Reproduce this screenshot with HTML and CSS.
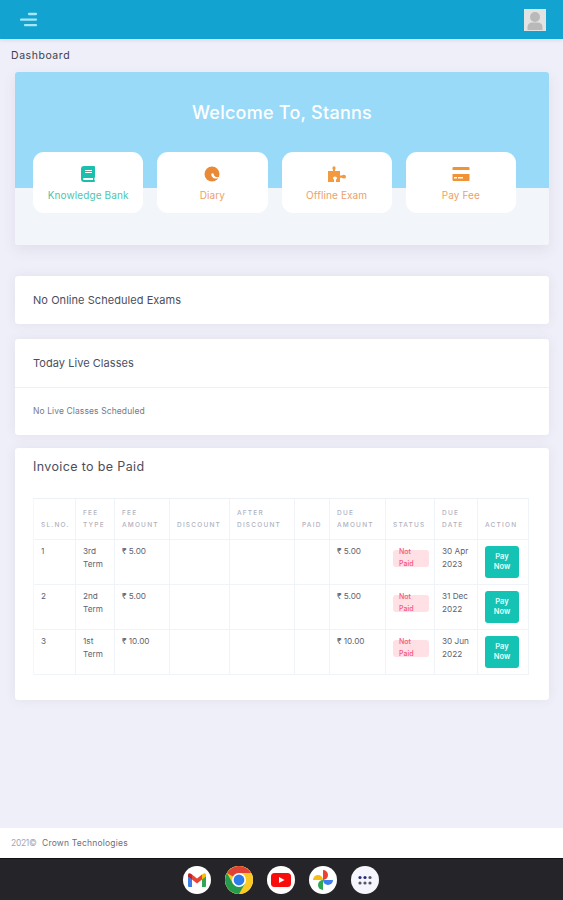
FILE: index.html
```
<!DOCTYPE html>
<html lang="en">
<head>
  <meta charset="utf-8">
  <title>Dashboard</title>
  <link rel="stylesheet" href="styles.css">
</head>
<body>
  <header class="topbar">
    <svg class="menu" width="18" height="16" viewBox="0 0 18 16">
      <path d="M9 2h7M1 7.600h15M5 13.200h11" fill="none" stroke="#a5e6f8" stroke-width="2.300" stroke-linecap="round"/>
    </svg>
    <svg class="avatar" width="22" height="22" viewBox="0 0 22 22">
      <rect width="22" height="22" fill="#e2e2e2"/>
      <circle cx="11" cy="8" r="5" fill="#b9b9b9"/>
      <path d="M3.500 21v-3c0-3 2-4.500 5-4.500h5c3 0 5 1.500 5 4.500v3z" fill="#b9b9b9"/>
    </svg>
  </header>
  <main>
    <h1 class="page-title">Dashboard</h1>
    <section class="hero">
      <h2>Welcome To, Stanns</h2>
      <div class="tiles">
        <a class="tile green">
          <svg width="16" height="16" viewBox="0 0 16 16">
            <path fill-rule="evenodd" d="M4 0h10q1 0 1 1v10q0 .7-.6 1v2q.6.200.6 1t-1 1H4q-3 0-3-3V3q0-3 3-3zM5 4v1h7V4zM5 6v1h7V6zM4 12q-1 0-1 1t1 1h9v-2z" fill="#1cbfae"/>
          </svg>
          <span>Knowledge Bank</span>
        </a>
        <a class="tile">
          <svg width="16" height="16" viewBox="0 0 16 16">
            <circle cx="8" cy="8" r="7.500" fill="#e98a37"/>
            <path d="M16 10.500Q13.500 11.800 11 10.500 9.500 9.500 9.700 7.800 8.500 6.600 7.300 8 6.700 10.500 9.300 12q2 1 4.300.300L15 13z" fill="#fff"/>
          </svg>
          <span>Diary</span>
        </a>
        <a class="tile">
          <svg width="20" height="16" viewBox="0 0 20 16">
            <path d="M1 5h5V3.800Q5.400 3 5.400 2q0-1.700 1.600-1.700T8.600 2q0 1-.6 1.800V5h5v4.600h1.700Q15.600 8.800 16.800 8.800 19 8.800 19 10.700T16.800 12.600q-1.200 0-2.100-.8H13V16H9v-2.500Q10 13 10 12q0-1.500-2-1.500T6 12q0 1 1 1.500V16H1z" fill="#f29a3d"/>
          </svg>
          <span>Offline Exam</span>
        </a>
        <a class="tile">
          <svg width="18" height="16" viewBox="0 0 18 16">
            <path fill-rule="evenodd" d="M1.500 1h15q1 0 1 1v2H.5V2q0-1 1-1zM.5 8h17v6q0 1-1 1h-15q-1 0-1-1zM2 11v1.500h3V11zM6 11v1.500h5V11z" fill="#f29236"/>
          </svg>
          <span>Pay Fee</span>
        </a>
      </div>
    </section>
    <section class="card exams">
      <h3>No Online Scheduled Exams</h3>
    </section>
    <section class="card live">
      <h3>Today Live Classes</h3>
      <p>No Live Classes Scheduled</p>
    </section>
    <section class="card invoice">
      <h2>Invoice to be Paid</h2>
      <table>
        <colgroup>
          <col class="w42"><col class="w39"><col class="w55"><col class="w60"><col class="w65">
          <col class="w35"><col class="w56"><col class="w49"><col class="w43"><col class="w51">
        </colgroup>
        <thead>
          <tr>
            <th>SL.NO.</th><th>FEE<br>TYPE</th><th>FEE<br>AMOUNT</th><th>DISCOUNT</th><th>AFTER<br>DISCOUNT</th>
            <th>PAID</th><th>DUE<br>AMOUNT</th><th>STATUS</th><th>DUE<br>DATE</th><th>ACTION</th>
          </tr>
        </thead>
        <tbody>
          <tr>
            <td>1</td><td>3rd<br>Term</td><td>₹ 5.00</td><td></td><td></td><td></td><td>₹ 5.00</td>
            <td><span class="badge">Not<br>Paid</span></td><td>30 Apr<br>2023</td><td><button>Pay<br>Now</button></td>
          </tr>
          <tr>
            <td>2</td><td>2nd<br>Term</td><td>₹ 5.00</td><td></td><td></td><td></td><td>₹ 5.00</td>
            <td><span class="badge">Not<br>Paid</span></td><td>31 Dec<br>2022</td><td><button>Pay<br>Now</button></td>
          </tr>
          <tr>
            <td>3</td><td>1st<br>Term</td><td>₹ 10.00</td><td></td><td></td><td></td><td>₹ 10.00</td>
            <td><span class="badge">Not<br>Paid</span></td><td>30 Jun<br>2022</td><td><button>Pay<br>Now</button></td>
          </tr>
        </tbody>
      </table>
    </section>
  </main>
  <footer class="footer"><span class="year">2021©</span><span class="company">Crown Technologies</span></footer>
  <nav class="dock">
    <span class="app">
      <svg width="20" height="16" viewBox="0 0 20 16">
        <path d="M1 3v11q0 1 1 1h3V6z" fill="#3c7de8"/>
        <path d="M19 3v11q0 1-1 1h-3V6z" fill="#2fa853"/>
        <path d="M5 2.500l5 4 5-4v5l-5 4-5-4z" fill="#e94335"/>
        <path d="M1 3q0-3 4-.5v5L1 4.500z" fill="#c5221f"/>
        <path d="M19 3q0-3-4-.5v5l4-3z" fill="#fbbc04"/>
      </svg>
    </span>
    <span class="app">
      <svg width="28" height="28" viewBox="0 0 28 28">
        <circle cx="14" cy="14" r="14" fill="#fbc921"/>
        <path d="M14 14L1.900 7A14 14 0 0 1 26.100 7H14z" fill="#e04235"/>
        <path d="M1.900 7A14 14 0 0 0 14 28l6-10.500L14 14 7.900 17.500z" fill="#279b4d"/>
        <circle cx="14" cy="14" r="7" fill="#fff"/>
        <circle cx="14" cy="14" r="5.400" fill="#2e7bea"/>
      </svg>
    </span>
    <span class="app">
      <svg width="20" height="14" viewBox="0 0 20 14">
        <rect width="20" height="14" rx="3.500" fill="#f80d0d"/>
        <path d="M8 4l5.500 3L8 10z" fill="#fff"/>
      </svg>
    </span>
    <span class="app">
      <svg width="20" height="20" viewBox="0 0 20 20">
        <path d="M10 0a5 5 0 0 1 0 10z" fill="#e94335"/>
        <path d="M20 10a5 5 0 0 1-10 0z" fill="#3d80ed"/>
        <path d="M10 20a5 5 0 0 1 0-10z" fill="#32a653"/>
        <path d="M0 10a5 5 0 0 1 10 0z" fill="#f9bc15"/>
      </svg>
    </span>
    <span class="app apps">
      <svg width="14" height="10" viewBox="0 0 14 10">
        <g fill="#282c78"><circle cx="2" cy="2.500" r="1.600"/><circle cx="7" cy="2.500" r="1.600"/></g>
        <g fill="#555766"><circle cx="12" cy="2.500" r="1.600"/><circle cx="2" cy="8" r="1.600"/><circle cx="7" cy="8" r="1.600"/><circle cx="12" cy="8" r="1.600"/></g>
      </svg>
    </span>
  </nav>
</body>
</html>
```
FILE: styles.css
```
* {
  box-sizing: border-box;
}
body {
  margin: 0;
  height: 900px;
  display: flex;
  flex-direction: column;
  background: #efeff9;
  font-family: Inter, "Noto Sans", sans-serif;
  color: #4c4e5c;
  overflow: hidden;
}
h1, h2, h3, p {
  margin: 0;
  font-weight: 400;
}
svg {
  display: block;
}
.topbar {
  height: 39px;
  flex: none;
  display: flex;
  align-items: center;
  justify-content: space-between;
  padding: 0 17px 0 20px;
  background: #13a3d1;
  box-shadow: 0 1px 4px rgba(80, 80, 110, .15);
}
main {
  flex: 1;
  padding: 0 14px 0 15px;
}
.page-title {
  height: 33px;
  margin-left: -4px;
  font-size: 10.5px;
  line-height: 33px;
  letter-spacing: .55px;
  color: #3c3d4c;
}
.hero {
  height: 173px;
  padding: 30px 33px 0 18px;
  border-radius: 3px;
  background: linear-gradient(#99daf9 116px, #f2f6fa 116px);
  box-shadow: 0 5px 14px rgba(82, 63, 105, .09);
}
.hero h2 {
  height: 50px;
  margin-right: -15px;
  font-size: 18px;
  font-weight: 500;
  line-height: 21px;
  letter-spacing: .25px;
  text-align: center;
  color: #fff;
}
.tiles {
  display: grid;
  grid-template-columns: repeat(4, 1fr);
  gap: 14px;
}
.tile {
  height: 61px;
  padding-top: 14px;
  display: flex;
  flex-direction: column;
  align-items: center;
  gap: 6px;
  border-radius: 11px;
  background: #fff;
  font-size: 10px;
  line-height: 14px;
  letter-spacing: .1px;
  color: #eda06a;
  white-space: nowrap;
}
.tile.green {
  color: #4fc5ad;
}
.card {
  border-radius: 3px;
  background: #fff;
  box-shadow: 0 0 12px rgba(82, 63, 105, .08);
}
.card h3 {
  height: 48px;
  padding-left: 18px;
  font-size: 11px;
  line-height: 48px;
  letter-spacing: .05px;
}
.exams {
  margin-top: 31px;
}
.live {
  height: 96px;
  margin-top: 15px;
}
.live p {
  padding-left: 18px;
  border-top: 1px solid #eff0f5;
  font-size: 8.5px;
  line-height: 47px;
  letter-spacing: .1px;
  color: #777985;
}
.invoice {
  height: 252px;
  margin-top: 13px;
  padding: 0 18px;
}
.invoice h2 {
  height: 50px;
  font-size: 12.5px;
  line-height: 37px;
  letter-spacing: .36px;
}
table {
  width: 496px;
  table-layout: fixed;
  border-collapse: separate;
  border-spacing: 0;
  border-top: 1px solid #edf0f5;
  border-left: 1px solid #f5f7fa;
}
.w35 { width: 35px; }
.w39 { width: 39px; }
.w42 { width: 42px; }
.w43 { width: 43px; }
.w49 { width: 49px; }
.w51 { width: 51px; }
.w55 { width: 55px; }
.w56 { width: 56px; }
.w60 { width: 60px; }
.w65 { width: 65px; }
th, td {
  padding: 0 0 0 7px;
  border-right: 1px solid #f0f3f7;
  border-bottom: 1px solid #f0f3f7;
  text-align: left;
  white-space: nowrap;
}
th {
  height: 41px;
  padding-bottom: 8px;
  font-size: 6.5px;
  font-weight: 500;
  line-height: 11.500px;
  letter-spacing: 1.2px;
  vertical-align: bottom;
  color: #b0b2c0;
}
td {
  height: 45px;
  padding-top: 5px;
  font-size: 8.2px;
  line-height: 12.500px;
  vertical-align: top;
  color: #5f616d;
}
.badge {
  display: flow-root;
  width: 36px;
  height: 17px;
  margin-top: 5px;
  padding-left: 6px;
  border-radius: 3px;
  background: #ffe0e5;
  font-size: 7px;
  font-weight: 500;
  line-height: 11.500px;
  color: #f65778;
}
.badge::before {
  content: "";
  display: block;
  margin-top: -4px;
  height: 0;
}
button {
  display: block;
  width: 34px;
  height: 32px;
  margin: 1px 0 0;
  padding: 0;
  border: 0;
  border-radius: 3px;
  background: #15c3b5;
  font: 600 7.5px/10.500px Inter, sans-serif;
  color: #e7fffb;
}
.footer {
  height: 30px;
  flex: none;
  display: flex;
  gap: 7px;
  padding-left: 11px;
  background: #fff;
  font-size: 8.5px;
  line-height: 30px;
  color: #6d6f7b;
}
.year {
  width: 24px;
  letter-spacing: -.3px;
  color: #a5a7b6;
}
.company {
  letter-spacing: .2px;
}
.dock {
  height: 42px;
  flex: none;
  display: flex;
  align-items: center;
  justify-content: center;
  gap: 14px;
  padding-right: 1px;
  border-top: 1px solid #111113;
  background: #252529;
}
.app {
  width: 28px;
  height: 28px;
  display: flex;
  align-items: center;
  justify-content: center;
  border-radius: 50%;
  background: #fff;
}
.apps {
  background: #f5f5fe;
}
```
